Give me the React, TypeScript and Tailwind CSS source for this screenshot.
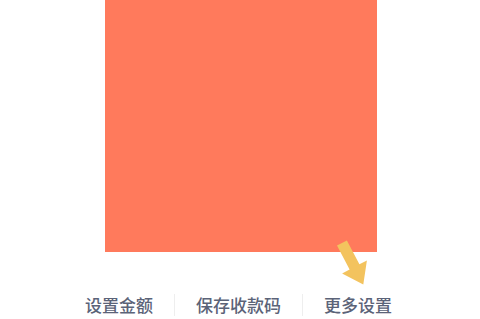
const items = ["设置金额", "保存收款码", "更多设置"];

export default function App() {
  return (
    <div className="relative h-[319px] w-[480px] overflow-hidden bg-white font-['Noto_Sans_CJK_SC',sans-serif]">
      <div className="flex flex-col items-center">
        <div className="ml-[2px] h-[252px] w-[272px] bg-[#ff7a5c]" />
        <div className="mt-[42px] ml-[-3px] flex items-center">
          {items.map((label, i) => (
            <div key={label} className="flex items-center">
              {i > 0 && <div className="h-[22px] w-px bg-[#eeeeee]" />}
              <span
                className={
                  "px-[21px] text-[17px] font-medium leading-[20px] text-[#5b6378] " +
                  (i === 0 ? "pl-0" : "") +
                  (i === items.length - 1 ? " pr-0" : "")
                }
              >
                {label}
              </span>
            </div>
          ))}
        </div>
      </div>

      {/* pointer arrow over the "更多设置" item */}
      <svg
        className="absolute left-[330px] top-[234px]"
        width="46"
        height="56"
        viewBox="330 234 46 56"
      >
        <polygon
          points="337,245.6 346.9,240.4 359.4,264.3 366.9,260.4 363.3,284.5 342.1,273.4 349.6,269.5"
          fill="#f3c35e"
        />
      </svg>
    </div>
  );
}
